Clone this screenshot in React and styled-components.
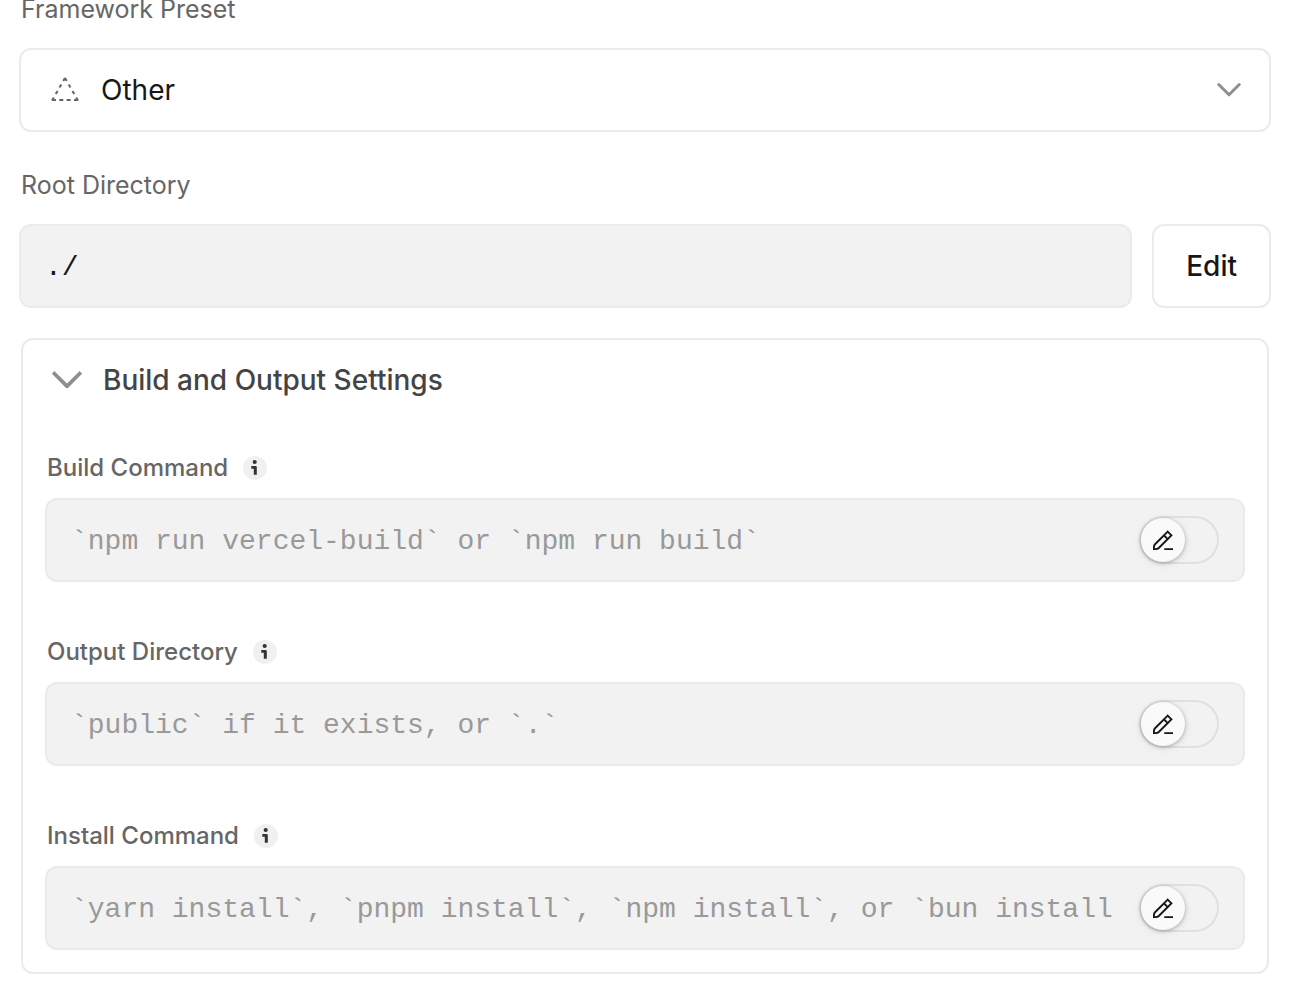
import React, { useState } from "react";
import styled, { createGlobalStyle } from "styled-components";

const GlobalStyle = createGlobalStyle`
  *, *::before, *::after { box-sizing: border-box; }
  body {
    margin: 0;
    background: #fff;
    color: #171717;
    font-family: Inter, "Liberation Sans", sans-serif;
    overflow-x: hidden;
  }
  input, select, button { font: inherit; color: inherit; margin: 0; }
`;

const Page = styled.main`
  display: flex;
  flex-direction: column;
  gap: 30px;
  margin-top: -8px;
  padding: 0 19px 10px;
`;

const Fields = styled.div`
  display: flex;
  flex-direction: column;
  gap: ${(p) => p.$gap};
`;

const Field = styled.div`
  display: flex;
  flex-direction: column;
  gap: ${(p) => p.$gap};
`;

const Label = styled.label`
  padding-left: 2px;
  color: #666;
  font-size: ${(p) => (p.$strong ? "24px" : "25px")};
  font-weight: ${(p) => (p.$strong ? 500 : 400)};
  line-height: ${(p) => (p.$strong ? "32px" : "34px")};
`;

const LabelRow = styled.div`
  display: flex;
  align-items: center;
  gap: 15px;
`;

const SelectWrap = styled.div`
  position: relative;
`;

const Select = styled.select`
  display: block;
  width: 100%;
  height: 84px;
  padding: 0 80px;
  appearance: none;
  border: 2px solid #ebebeb;
  border-radius: 12px;
  background: #fff;
  font-size: 28px;
`;

const SelectIcon = styled.span`
  position: absolute;
  top: 0;
  bottom: 0;
  left: ${(p) => (p.$side === "left" ? "32px" : "auto")};
  right: ${(p) => (p.$side === "right" ? "26px" : "auto")};
  display: flex;
  align-items: center;
  color: #8f8f8f;
  pointer-events: none;
`;

const Row = styled.div`
  display: flex;
  gap: 20px;
`;

const InputBox = styled.div`
  display: flex;
  align-items: center;
  gap: 24px;
  width: 100%;
  min-width: 0;
  height: 84px;
  padding: 0 24px;
  border: 2px solid #ebebeb;
  border-radius: 12px;
  background: #f2f2f2;
`;

const Input = styled.input`
  flex: 1;
  min-width: 0;
  height: 40px;
  padding: 2px 0 0;
  border: 0;
  outline: 0;
  background: transparent;
  font-family: "Liberation Mono", monospace;
  font-size: 28px;
  &::placeholder { color: #999; opacity: 1; }
`;

const EditButton = styled.button`
  flex: none;
  padding: 0 32px;
  border: 2px solid #ebebeb;
  border-radius: 12px;
  background: #fff;
  font-size: 28px;
  font-weight: 500;
`;

const Panel = styled.section`
  margin: 0 2px;
  border: 2px solid #ebebeb;
  border-radius: 12px;
`;

const PanelHeader = styled.button`
  display: flex;
  align-items: center;
  gap: 16px;
  width: 100%;
  height: 80px;
  padding: 0 24px;
  border: 0;
  background: none;
  color: #444;
  font-size: 28px;
  font-weight: 500;
  text-align: left;
  svg { color: #8f8f8f; }
`;

const PanelBody = styled.div`
  padding: 32px 22px 22px;
`;

const InfoButton = styled.button`
  display: flex;
  width: 24px;
  height: 24px;
  padding: 0;
  border: 0;
  border-radius: 50%;
  background: #f0f0f0;
  color: #333;
`;

const Toggle = styled.label`
  position: relative;
  flex: none;
  width: 80px;
  height: 48px;
  border: 2px solid #e0e0e0;
  border-radius: 24px;
`;

const ToggleInput = styled.input`
  position: absolute;
  inset: 0;
  width: 100%;
  height: 100%;
  opacity: 0;
`;

const Thumb = styled.span`
  display: flex;
  align-items: center;
  justify-content: center;
  width: 44px;
  height: 44px;
  border-radius: 50%;
  background: #fafafa;
  box-shadow: 0 1px 4px rgba(0, 0, 0, 0.28), 0 2px 12px rgba(0, 0, 0, 0.06);
  margin-left: ${(p) => (p.$on ? "32px" : "0")};
`;

const ChevronIcon = ({ size }) => (
  <svg width={size} height={size} viewBox="0 0 16 16" aria-hidden="true">
    <path
      fill="currentColor"
      fillRule="evenodd"
      d="M14.06 5.5 13.53 6.03 8.707 10.854a1 1 0 0 1-1.414 0L2.47 6.03 1.94 5.5 3 4.44l.53.53L8 9.44l4.47-4.47L13 4.44z"
    />
  </svg>
);

const SelectChevronIcon = () => (
  <svg width="32" height="32" viewBox="0 0 32 32" aria-hidden="true">
    <path d="M5.7 10.5 16 20.8 26.3 10.5" fill="none" stroke="currentColor" strokeWidth="3" strokeLinecap="round" strokeLinejoin="round" />
  </svg>
);

const TriangleIcon = () => (
  <svg width="28" height="26" viewBox="0 0 28 26" aria-hidden="true">
    <g fill="none" stroke="#666" strokeWidth="2">
      <path d="M1 23H27" strokeDasharray="4 3.33" />
      <path d="M1 23.5 14 1" strokeDasharray="3.6 3.9" />
      <path d="M27 23.5 14 1" strokeDasharray="3.6 3.9" />
    </g>
  </svg>
);

const PencilIcon = () => (
  <svg width="20" height="20" viewBox="0 0 16 16" aria-hidden="true">
    <path
      fill="#171717"
      fillRule="evenodd"
      d="M11.75.19l.53.53 3 3 .53.53-.53.53L5.159 14.902A3.75 3.75 0 0 1 2.507 16H0v-2.507c0-.995.395-1.949 1.098-2.652L11.22.72zM11.75 2.31 9.81 4.25l1.94 1.94 1.94-1.94zM2.159 11.902 8.75 5.31l1.94 1.94-6.592 6.591a2.25 2.25 0 0 1-1.59.659H1.5v-1.007c0-.597.237-1.17.659-1.591M9 16h7v-1.5H9z"
    />
  </svg>
);

const InfoIcon = () => (
  <svg width="24" height="24" viewBox="0 0 24 24" aria-hidden="true">
    <circle cx="11.7" cy="6" r="2.1" fill="currentColor" />
    <path d="M8.3 10h4.2a1.3 1.3 0 0 1 1.3 1.3v7.4h-3v-6H8.3z" fill="currentColor" />
  </svg>
);

const commands = [
  { id: "build", label: "Build Command", hint: "`npm run vercel-build` or `npm run build`" },
  { id: "output", label: "Output Directory", hint: "`public` if it exists, or `.`" },
  { id: "install", label: "Install Command", hint: "`yarn install`, `pnpm install`, `npm install`, or `bun install`" },
];

function CommandField({ id, label, hint }) {
  const [on, setOn] = useState(false);
  return (
    <Field $gap="14px">
      <LabelRow>
        <Label htmlFor={id} $strong>{label}</Label>
        <InfoButton type="button" aria-label={`About ${label}`}>
          <InfoIcon />
        </InfoButton>
      </LabelRow>
      <InputBox>
        <Input id={id} placeholder={hint} disabled={!on} />
        <Toggle>
          <ToggleInput
            type="checkbox"
            role="switch"
            aria-label={`Override ${label}`}
            checked={on}
            onChange={(e) => setOn(e.target.checked)}
          />
          <Thumb $on={on}>
            <PencilIcon />
          </Thumb>
        </Toggle>
      </InputBox>
    </Field>
  );
}

export default function App() {
  const [open, setOpen] = useState(true);
  return (
    <>
      <GlobalStyle />
      <Page>
        <Fields $gap="36px">
          <Field $gap="22px">
            <Label htmlFor="preset">Framework Preset</Label>
            <SelectWrap>
              <Select id="preset" defaultValue="other">
                <option value="other">Other</option>
              </Select>
              <SelectIcon $side="left">
                <TriangleIcon />
              </SelectIcon>
              <SelectIcon $side="right">
                <SelectChevronIcon />
              </SelectIcon>
            </SelectWrap>
          </Field>
          <Field $gap="22px">
            <Label htmlFor="root-dir">Root Directory</Label>
            <Row>
              <InputBox>
                <Input id="root-dir" value="./" readOnly />
              </InputBox>
              <EditButton type="button">Edit</EditButton>
            </Row>
          </Field>
        </Fields>
        <Panel>
          <PanelHeader type="button" aria-expanded={open} onClick={() => setOpen(!open)}>
            <ChevronIcon size={40} />
            Build and Output Settings
          </PanelHeader>
          {open && (
            <PanelBody>
              <Fields $gap="54px">
                {commands.map((c) => (
                  <CommandField key={c.id} {...c} />
                ))}
              </Fields>
            </PanelBody>
          )}
        </Panel>
      </Page>
    </>
  );
}
